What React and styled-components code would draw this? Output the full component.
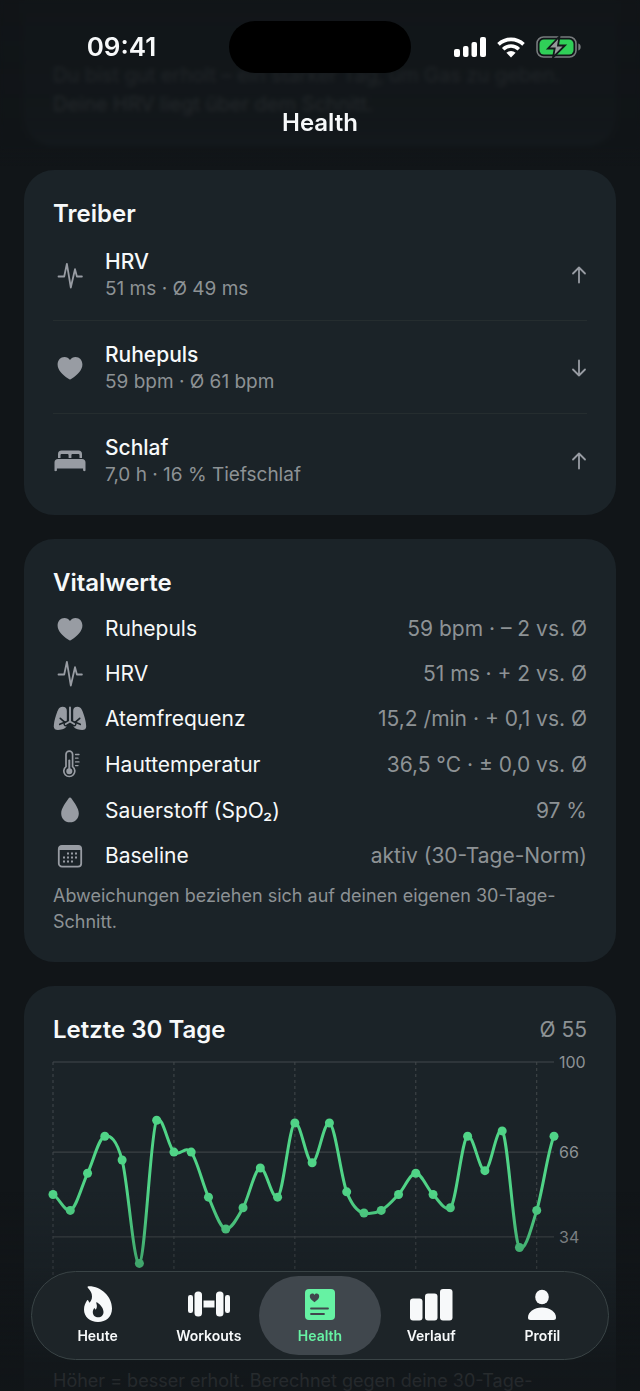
import { useState } from "react";
import styled, { createGlobalStyle, ThemeProvider } from "styled-components";

const theme = {
  colors: {
    page: "#111518",
    card: "#1b2328",
    text: "#f7f9fa",
    secondaryText: "#8d9295",
    icon: "#989ca3",
    lines: "#252d2f",
    grid: "#43494c",
    line: "#50d487",
    accent: "#66f2a3",
    tab: "#1d2428",
    tabActive: "#40474d",
    tabBorder: "#3a4446",
  },
};

const GlobalStyle = createGlobalStyle`
  * {
    box-sizing: border-box;
  }

  body {
    margin: 0;
    background: ${theme.colors.page};
    color: ${theme.colors.text};
    font-family: Inter, "Liberation Sans", sans-serif;
  }

  h1, h2, p, ul {
    margin: 0;
    padding: 0;
  }
`;

const Screen = styled.div`
  height: 100vh;
  overflow-y: auto;
  scrollbar-width: none;
`;

const Header = styled.header`
  position: fixed;
  top: 0;
  left: 0;
  right: 0;
  z-index: 10;
  padding: 21px 0 28px;
  background: linear-gradient(
    rgba(17, 21, 24, 0.94) 0%,
    rgba(17, 21, 24, 0.84) 75%,
    rgba(17, 21, 24, 0.7) 88%,
    rgba(17, 21, 24, 0) 100%
  );
`;

const HeaderBlur = styled.div`
  position: absolute;
  inset: 0 0 16px;
  z-index: -1;
  backdrop-filter: blur(2px);
`;

const StatusBar = styled.div`
  display: grid;
  grid-template-columns: 1fr 182px 1fr;
  align-items: center;
`;

const Clock = styled.time`
  padding-left: 14px;
  text-align: center;
  font-size: 26px;
  line-height: 52px;
  font-weight: 600;
`;

const Island = styled.div`
  height: 52px;
  border-radius: 26px;
  background: #000;
`;

const StatusIcons = styled.div`
  display: flex;
  align-items: center;
  justify-content: center;
  gap: 11px;
  padding-right: 16px;
`;

const ScreenTitle = styled.h1`
  margin-top: 35px;
  text-align: center;
  font-size: 24px;
  line-height: 30px;
  font-weight: 600;
`;

const Cards = styled.main`
  display: flex;
  flex-direction: column;
  gap: 24px;
  padding: 0 24px 160px;
`;

const Card = styled.section`
  padding: 29px 29px 27px;
  border-radius: 30px;
  background: ${({ theme }) => theme.colors.card};
`;

const SummaryCard = styled(Card)`
  padding-top: 61px;
  border-top-left-radius: 0;
  border-top-right-radius: 0;
  font-size: 20px;
  line-height: 29px;
  color: ${({ theme }) => theme.colors.secondaryText};
`;

const CardHeader = styled.div`
  display: flex;
  align-items: center;
  justify-content: space-between;
`;

const CardTitle = styled.h2`
  font-size: 24px;
  line-height: 29px;
  font-weight: 600;
`;

const Average = styled.span`
  font-size: 21px;
  color: ${({ theme }) => theme.colors.secondaryText};
`;

const List = styled.ul`
  list-style: none;
`;

const IconBox = styled.span`
  width: 34px;
  flex: none;
  display: flex;
  align-items: center;
  justify-content: center;
  color: ${({ theme }) => theme.colors.icon};

  svg {
    display: block;
  }
`;

const DriverItem = styled.li`
  display: flex;
  align-items: center;
  gap: 18px;
  padding: 20px 0 18px;
  border-bottom: 1px solid ${({ theme }) => theme.colors.lines};
  color: ${({ theme }) => theme.colors.icon};

  &:last-child {
    border-bottom: none;
    padding-bottom: 0;
  }
`;

const DriverText = styled.div`
  flex: 1;
  line-height: 27px;
`;

const DriverName = styled.p`
  font-size: 21px;
  font-weight: 500;
  color: ${({ theme }) => theme.colors.text};
`;

const DriverValue = styled.p`
  font-size: 19px;
  color: ${({ theme }) => theme.colors.secondaryText};
`;

const VitalItem = styled.li`
  display: flex;
  align-items: center;
  gap: 18px;
  min-height: 27px;
  margin-top: 18px;
  font-size: 21px;
  line-height: 27px;
`;

const VitalValue = styled.span`
  margin-left: auto;
  color: ${({ theme }) => theme.colors.secondaryText};
`;

const Footnote = styled.p`
  margin-top: 14px;
  font-size: 18px;
  line-height: 26px;
  color: ${({ theme }) => theme.colors.secondaryText};
`;

const Chart = styled.svg`
  display: block;
  width: 100%;
  margin-top: 10px;
  overflow: visible;

  .grid {
    stroke: ${({ theme }) => theme.colors.grid};
  }

  .curve {
    fill: none;
    stroke: ${({ theme }) => theme.colors.line};
    stroke-width: 3;
  }

  circle {
    fill: ${({ theme }) => theme.colors.line};
  }

  text {
    font-size: 16px;
    fill: ${({ theme }) => theme.colors.secondaryText};
  }
`;

const BottomBar = styled.div`
  position: fixed;
  left: 0;
  right: 0;
  bottom: 0;
  z-index: 10;
  padding: 80px 31px 31px;
  background: linear-gradient(
    rgba(17, 21, 24, 0) 0%,
    rgba(17, 21, 24, 0.25) 38%,
    rgba(17, 21, 24, 0.8) 85%,
    rgba(17, 21, 24, 0.86) 100%
  );
`;

const TabBar = styled.nav`
  display: flex;
  padding: 4px 10px;
  border: 1px solid ${({ theme }) => theme.colors.tabBorder};
  border-radius: 45px;
  background: ${({ theme }) => theme.colors.tab};
`;

const Tab = styled.button`
  flex: 1;
  margin: 0 -5px;
  height: 79px;
  padding: 9px 0 0;
  display: flex;
  flex-direction: column;
  align-items: center;
  border: none;
  border-radius: 40px;
  background: ${({ theme, $active }) =>
    $active ? theme.colors.tabActive : "transparent"};
  color: ${({ theme, $active }) =>
    $active ? theme.colors.accent : theme.colors.text};
  font-family: inherit;
  font-size: 14px;
  line-height: 18px;
  font-weight: 600;
  cursor: pointer;

  svg {
    height: 38px;
    margin-bottom: 4px;
  }
`;

const HeartIcon = () => (
  <svg width="26" height="24" viewBox="0 0 26 24" fill="currentColor">
    <path d="M13 23.4c-.5 0-1-.3-1.500-.6C5 18.400.6 13.600.6 8.400.6 4 3.600.9 7.400.9c2.400 0 4.400 1.200 5.600 3.200C14.200 2.100 16.200.9 18.600.9c3.800 0 6.800 3.100 6.800 7.500 0 5.200-4.400 10-10.900 14.400-.5.3-1 .6-1.500.6z" />
  </svg>
);

const PulseIcon = () => (
  <svg
    width="26"
    height="27"
    viewBox="0 0 26 27"
    fill="none"
    stroke="currentColor"
    strokeWidth="1.8"
    strokeLinecap="round"
    strokeLinejoin="round"
  >
    <path d="M1.500 14.500H7.200L9.900 1.800 13.800 25.500 18 7.200l1.900 7.300h5" />
  </svg>
);

const BedIcon = () => (
  <svg width="32" height="22" viewBox="0 0 32 22" fill="currentColor">
    <path d="M4 8V4c0-2.200 1.300-3.500 3.500-3.500h17C26.700.5 28 1.800 28 4v4h-2.500V5.500c0-.9-.5-1.400-1.400-1.400h-5.300c-.9 0-1.400.5-1.400 1.400V8h-2.800V5.500c0-.9-.5-1.400-1.400-1.400H7.900c-.9 0-1.400.5-1.400 1.400V8z" />
    <path d="M4 9h24c2.200 0 3.500 1.300 3.500 3.500V20c0 .8-.4 1.200-1.200 1.200s-1.200-.4-1.200-1.200v-1.500H2.900V20c0 .8-.4 1.200-1.200 1.200S.5 20.800.5 20v-7.500C.5 10.300 1.800 9 4 9z" />
  </svg>
);

const LungsIcon = () => (
  <svg width="34" height="25" viewBox="0 0 34 25" fill="currentColor">
    <path d="M9.500.8c2.800 0 4.300 1.400 4.300 4v14c0 2.300-1.500 3.500-4.300 4.400C4.500 24.700.8 24.300.8 20.500.8 16 3 8 5.300 3.500 6.200 1.800 7.500.8 9.500.8z" />
    <path d="M24.500.8c-2.800 0-4.300 1.400-4.300 4v14c0 2.300 1.500 3.500 4.300 4.400 5 1.500 8.700 1.100 8.700-2.700 0-4.500-2.200-12.500-4.500-17-.9-1.700-2.200-2.700-4.200-2.700z" />
    <g fill="none" strokeLinecap="round" strokeLinejoin="round">
      <path
        d="M6.800 18.300l5.500-2.300h9.400l5.500 2.300M7.300 12.300l4 3.500M26.700 12.300l-4 3.500"
        stroke="#1b2328"
        strokeWidth="1.700"
      />
      <path d="M17 2v13.500L12.800 18M17 15.500l4.200 2.500" stroke="#1b2328" strokeWidth="4.600" />
      <path d="M17 1.500v14L12.800 18M17 15.500l4.200 2.500" stroke="currentColor" strokeWidth="1.900" />
    </g>
  </svg>
);

const ThermometerIcon = () => (
  <svg
    width="20"
    height="28"
    viewBox="0 0 20 28"
    fill="none"
    stroke="currentColor"
    strokeWidth="1.700"
    strokeLinecap="round"
  >
    <path d="M6 16.600V4.500a3.300 3.300 0 0 1 6.600 0v12.100a5.500 5.500 0 1 1-6.600 0z" />
    <path d="M9.300 10.500V21" strokeWidth="2" />
    <circle cx="9.300" cy="21.200" r="2.200" fill="currentColor" />
    <path d="M15.500 4.500H19M15.500 8.200H18M15.500 11.900H19M15.500 15.600H18" strokeWidth="1.300" />
  </svg>
);

const DropIcon = () => (
  <svg width="20" height="28" viewBox="0 0 20 28" fill="currentColor">
    <path d="M10 1.500c.6 0 1 .3 1.500 1 3 4.500 7.300 9.800 7.300 15 0 5.200-3.700 8.800-8.800 8.800s-8.800-3.600-8.800-8.800c0-5.200 4.300-10.500 7.300-15 .5-.7.900-1 1.500-1z" />
  </svg>
);

const CalendarIcon = () => (
  <svg width="26" height="24" viewBox="0 0 26 24" fill="currentColor">
    <rect x="1.800" y="1.800" width="22.400" height="20.800" rx="3.200" fill="none" stroke="currentColor" strokeWidth="1.800" />
    <path d="M2 6V4.500C2 2.500 3 1.500 5 1.500h16c2 0 3 1 3 3V6z" />
    {[
      [11, 9.500], [15, 9.500], [19, 9.500],
      [7, 13.500], [11, 13.500], [15, 13.500], [19, 13.500],
      [7, 17.500], [11, 17.500], [15, 17.500],
    ].map(([x, y]) => (
      <rect key={`${x}-${y}`} x={x - 1} y={y - 1} width="2" height="2" />
    ))}
  </svg>
);

const ArrowIcon = ({ down }) => (
  <svg
    width="16"
    height="18"
    viewBox="1 0 16 18"
    fill="none"
    stroke="currentColor"
    strokeWidth="1.800"
    strokeLinecap="round"
    strokeLinejoin="round"
    role="img"
    aria-label={down ? "fallend" : "steigend"}
  >
    <path
      d={down ? "M9 1.500v15M3 10.500l6 6 6-6" : "M9 16.500v-15M3 7.500l6-6 6 6"}
    />
  </svg>
);

const SignalIcon = () => (
  <svg width="32" height="21" viewBox="0 0 32 21" fill="#fff">
    <rect x="0" y="12" width="6" height="8" rx="2" />
    <rect x="9" y="9" width="5.500" height="11" rx="2" />
    <rect x="17.500" y="5" width="5.500" height="15" rx="2" />
    <rect x="26" y="0" width="6" height="20" rx="2" />
  </svg>
);

const WifiIcon = () => (
  <svg width="28" height="21" viewBox="0 0 28 21">
    <g fill="none" stroke="#fff" strokeWidth="3.600">
      <path d="M1.500 7.400a18 18 0 0 1 25 0" />
      <path d="M6.200 12.200a11.200 11.200 0 0 1 15.600 0" />
    </g>
    <path d="M14 20.500l-4.600-4.700a6.700 6.700 0 0 1 9.200 0z" fill="#fff" />
  </svg>
);

const BatteryIcon = () => (
  <svg width="45" height="22" viewBox="0 0 45 22">
    <rect x="1" y="1" width="39" height="20" rx="6.500" fill="none" stroke="#777b7d" strokeWidth="1.600" />
    <path d="M42.300 7.500c1.600.6 2.400 1.800 2.400 3.500s-.8 2.900-2.400 3.500z" fill="#777b7d" />
    <rect x="3.500" y="3.500" width="34" height="15" rx="4.500" fill="#30cf58" />
    <path
      d="M23.500.5L12 12.500h6.700L17 21.500 29 9.500h-7z"
      fill="#96999b"
      stroke="#12181a"
      strokeWidth="1.800"
    />
  </svg>
);

const FlameIcon = () => (
  <svg width="30" height="38" viewBox="0 0 30 38">
    <path
      d="M5.500 1.300C18 1 29 11.500 29 23.500 29 32 23 37 15 37S1 32 1 24.500c0-4 1.500-6.500 2.800-8.800.5-.9 1.200-.7 1.600.1l1 2C8 16 9 14.500 9 11.500 9 8 7.500 5.500 5 3c-.8-.8-.5-1.700.5-1.700z"
      fill="currentColor"
    />
    <path
      d="M14.200 17.500C18 20 20.500 23.500 20.500 27c0 3.300-2.300 5.300-5.300 5.300S9.800 30.300 9.800 27.300c0-1.600.5-2.700 1.200-3.700.4-.5.8-.4 1 .1l.5 1c1.600-1.600 1.700-4 .9-6.300-.3-.8.100-1.300.8-.9z"
      fill="#1d2428"
    />
  </svg>
);

const DumbbellIcon = () => (
  <svg width="44" height="38" viewBox="0 0 44 38" fill="currentColor">
    <rect x="1" y="10" width="5" height="18" rx="2.200" />
    <rect x="7.500" y="6.500" width="7.500" height="25" rx="3.500" />
    <rect x="16.500" y="15.500" width="11" height="7" />
    <rect x="29" y="6.500" width="7.500" height="25" rx="3.500" />
    <rect x="38" y="10" width="5" height="18" rx="2.200" />
  </svg>
);

const HealthIcon = () => (
  <svg width="32" height="38" viewBox="0 0 32 38">
    <rect x="1" y="4" width="30" height="31" rx="4" fill="currentColor" />
    <path
      d="M10.500 17.200C7.300 15.100 5.800 13.200 5.800 11.300 5.800 9.700 6.900 8.600 8.300 8.600c1 0 1.700.5 2.200 1.300.5-.8 1.200-1.300 2.200-1.300 1.400 0 2.500 1.100 2.500 2.700 0 1.900-1.500 3.800-4.700 5.900z"
      fill="#40474d"
    />
    <path
      d="M7 23.500h17M7 29H20"
      stroke="#40474d"
      strokeWidth="1.800"
      strokeLinecap="round"
    />
  </svg>
);

const BarsIcon = () => (
  <svg width="44" height="38" viewBox="0 0 44 38" fill="currentColor">
    <rect x="1" y="13.500" width="12.500" height="22" rx="3" />
    <rect x="16" y="8.500" width="12.500" height="27" rx="3" />
    <rect x="31" y="4" width="12.500" height="31.500" rx="3" />
  </svg>
);

const PersonIcon = () => (
  <svg width="30" height="38" viewBox="0 0 30 38" fill="currentColor">
    <ellipse cx="15" cy="12" rx="6.800" ry="7.300" />
    <path d="M3.500 35C1.800 35 1 34.200 1 32.500 1 27 7 22.500 15 22.500S29 27 29 32.500c0 1.700-.8 2.500-2.500 2.500z" />
  </svg>
);

const drivers = [
  { name: "HRV", value: "51 ms · Ø 49 ms", Icon: PulseIcon },
  { name: "Ruhepuls", value: "59 bpm · Ø 61 bpm", Icon: HeartIcon, down: true },
  { name: "Schlaf", value: "7,0 h · 16 % Tiefschlaf", Icon: BedIcon },
];

const vitals = [
  { name: "Ruhepuls", value: "59 bpm · – 2 vs. Ø", Icon: HeartIcon },
  { name: "HRV", value: "51 ms · + 2 vs. Ø", Icon: PulseIcon },
  { name: "Atemfrequenz", value: "15,2 /min · + 0,1 vs. Ø", Icon: LungsIcon },
  { name: "Hauttemperatur", value: "36,5 °C · ± 0,0 vs. Ø", Icon: ThermometerIcon },
  { name: "Sauerstoff (SpO₂)", value: "97 %", Icon: DropIcon },
  { name: "Baseline", value: "aktiv (30-Tage-Norm)", Icon: CalendarIcon },
];

const tabs = [
  { name: "Heute", Icon: FlameIcon },
  { name: "Workouts", Icon: DumbbellIcon },
  { name: "Health", Icon: HealthIcon },
  { name: "Verlauf", Icon: BarsIcon },
  { name: "Profil", Icon: PersonIcon },
];

const scores = [
  50, 44, 58, 72, 63, 24, 78, 66, 66, 49, 37, 45, 60, 49, 77, 62, 77, 51, 43,
  44, 50, 58, 50, 45, 72, 59, 74, 30, 44, 72,
];

const PLOT_WIDTH = 501;
const PLOT_TOP = 8;
const PLOT_HEIGHT = 265;

const getX = (day) => (day * PLOT_WIDTH) / (scores.length - 1);
const getY = (score) => PLOT_TOP + PLOT_HEIGHT * (1 - score / 100);

// Catmull-Rom spline through all points, as cubic beziers.
// Local highs and lows get a flatter tangent so the curve doesn't overshoot.
const getCurve = (points) => {
  const slopes = points.map(([, y], i) => {
    const prev = (points[i - 1] || points[i])[1];
    const next = (points[i + 1] || points[i])[1];
    const isExtreme = (y - prev) * (next - y) < 0;
    return ((next - prev) / 6) * (isExtreme ? 0.4 : 1);
  });

  return points.slice(1).reduce((path, [x, y], i) => {
    const [x1, y1] = points[i];
    const third = (x - x1) / 3;
    return `${path} C${x1 + third} ${y1 + slopes[i]} ${x - third} ${
      y - slopes[i + 1]
    } ${x} ${y}`;
  }, `M${points[0][0]} ${points[0][1]}`);
};

const ScoreChart = () => {
  const points = scores.map((score, day) => [getX(day), getY(score)]);

  return (
    <Chart viewBox="0 0 534 300" role="img" aria-label="Letzte 30 Tage">
      {[100, 66, 34].map((score) => (
        <g key={score}>
          <path className="grid" d={`M0 ${getY(score)}H${PLOT_WIDTH}`} />
          <text x={PLOT_WIDTH + 5} y={getY(score) + 6}>
            {score}
          </text>
        </g>
      ))}
      {[0, 7, 14, 21, 28].map((day) => (
        <path
          key={day}
          className="grid"
          strokeDasharray="3 3"
          d={`M${getX(day)} ${PLOT_TOP}V${PLOT_TOP + PLOT_HEIGHT}`}
        />
      ))}
      <path className="curve" d={getCurve(points)} />
      {points.map(([x, y]) => (
        <circle key={x} cx={x} cy={y} r="4.5" />
      ))}
    </Chart>
  );
};

const App = () => {
  const [activeTab, setActiveTab] = useState("Health");

  return (
    <ThemeProvider theme={theme}>
      <GlobalStyle />
      <Screen>
        <Header>
          <HeaderBlur />
          <StatusBar>
            <Clock>09:41</Clock>
            <Island />
            <StatusIcons>
              <SignalIcon />
              <WifiIcon />
              <BatteryIcon />
            </StatusIcons>
          </StatusBar>
          <ScreenTitle>Health</ScreenTitle>
        </Header>
        <Cards>
          <SummaryCard>
            <p>Du bist gut erholt – ein starker Tag, um Gas zu geben.</p>
            <p>Deine HRV liegt über dem Schnitt.</p>
          </SummaryCard>
          <Card>
            <CardTitle>Treiber</CardTitle>
            <List>
              {drivers.map(({ name, value, Icon, down }) => (
                <DriverItem key={name}>
                  <IconBox>
                    <Icon />
                  </IconBox>
                  <DriverText>
                    <DriverName>{name}</DriverName>
                    <DriverValue>{value}</DriverValue>
                  </DriverText>
                  <ArrowIcon down={down} />
                </DriverItem>
              ))}
            </List>
          </Card>
          <Card>
            <CardTitle>Vitalwerte</CardTitle>
            <List>
              {vitals.map(({ name, value, Icon }) => (
                <VitalItem key={name}>
                  <IconBox>
                    <Icon />
                  </IconBox>
                  <span>{name}</span>
                  <VitalValue>{value}</VitalValue>
                </VitalItem>
              ))}
            </List>
            <Footnote>
              Abweichungen beziehen sich auf deinen eigenen 30-Tage-Schnitt.
            </Footnote>
          </Card>
          <Card>
            <CardHeader>
              <CardTitle>Letzte 30 Tage</CardTitle>
              <Average>Ø 55</Average>
            </CardHeader>
            <ScoreChart />
            <Footnote>
              Höher = besser erholt. Berechnet gegen deine 30-Tage-Schnittwerte.
            </Footnote>
          </Card>
        </Cards>
        <BottomBar>
          <TabBar>
            {tabs.map(({ name, Icon }) => (
              <Tab
                key={name}
                type="button"
                $active={name === activeTab}
                onClick={() => setActiveTab(name)}
              >
                <Icon />
                {name}
              </Tab>
            ))}
          </TabBar>
        </BottomBar>
      </Screen>
    </ThemeProvider>
  );
};

export default App;
